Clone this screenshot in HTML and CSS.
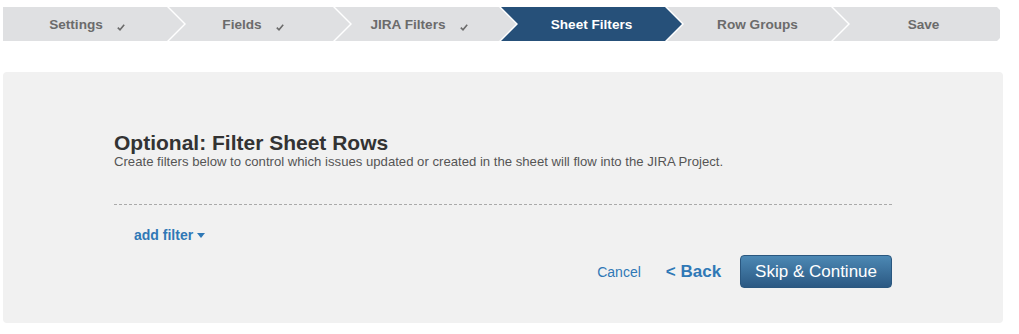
FILE: index.html
```html
<!DOCTYPE html>
<html lang="en">
<head>
    <meta charset="UTF-8">
    <meta name="viewport" content="width=device-width, initial-scale=1.0">
    <title>Sheet Filters</title>
    <link rel="stylesheet" href="styles.css">
</head>
<body>
    <div class="page">
        <div class="wizard">
            <div class="step first done">Settings<span class="check"><svg width="8" height="7" viewBox="0 0 8 7"><polyline points="0.8,3.6 3,5.8 7.2,0.8" fill="none" stroke="#6b6b6b" stroke-width="1.6"/></svg></span></div>
            <div class="step done">Fields<span class="check"><svg width="8" height="7" viewBox="0 0 8 7"><polyline points="0.8,3.6 3,5.8 7.2,0.8" fill="none" stroke="#6b6b6b" stroke-width="1.6"/></svg></span></div>
            <div class="step done">JIRA Filters<span class="check"><svg width="8" height="7" viewBox="0 0 8 7"><polyline points="0.8,3.6 3,5.8 7.2,0.8" fill="none" stroke="#6b6b6b" stroke-width="1.6"/></svg></span></div>
            <div class="step active">Sheet Filters</div>
            <div class="step">Row Groups</div>
            <div class="step">Save</div>
        </div>

        <div class="panel">
            <div class="content">
                <h1>Optional: Filter Sheet Rows</h1>
                <p class="intro">Create filters below to control which issues updated or created in the sheet will flow into the JIRA Project.</p>
                <div class="filters">
                    <a class="add-filter" href="#">add filter<span class="caret"></span></a>
                </div>
                <div class="actions">
                    <a class="cancel" href="#">Cancel</a>
                    <a class="back" href="#">&lt; Back</a>
                    <button type="button" class="primary">Skip &amp; Continue</button>
                </div>
            </div>
        </div>
    </div>
</body>
</html>
```

FILE: styles.css
```css
body {
    margin: 0;
    background-color: #fff;
    font-family: "Liberation Sans", Arial, sans-serif;
}
.page {
    width: 1000px;
    padding: 7px 0 0 3px;
}
.wizard {
    display: flex;
    width: 997px;
    height: 34px;
    overflow: hidden;
}
.step {
    flex: 0 0 181px;
    margin-left: -15px;
    padding-top: 1px;
    display: flex;
    align-items: center;
    justify-content: center;
    background-color: #dfe0e2;
    color: #6b6b6b;
    font-size: 13.6px;
    font-weight: bold;
    clip-path: polygon(0 0, calc(100% - 17px) 0, 100% 50%, calc(100% - 17px) 100%, 0 100%, 17px 50%);
}
.step.first {
    margin-left: 0;
    clip-path: polygon(0 0, calc(100% - 17px) 0, 100% 50%, calc(100% - 17px) 100%, 0 100%);
}
.step.active {
    background-color: #265079;
    color: #fff;
}
.check {
    display: inline-block;
    margin: 5px 13px 0 14px;
    line-height: 0;
}
.panel {
    margin-top: 31px;
    background-color: #f1f1f1;
    border-radius: 4px;
    padding: 59px 0 35px;
}
.content {
    width: 778px;
    margin: 0 auto;
}
h1 {
    margin: 0;
    font-size: 21px;
    line-height: 23px;
    color: #333;
}
.intro {
    margin: 0;
    font-size: 13.15px;
    line-height: 16px;
    color: #555;
}
.filters {
    margin-top: 34px;
    border-top: 1px dashed #aaa;
    padding: 22px 0 0 20px;
    font-size: 14px;
    line-height: 16px;
}
a {
    color: #2f78b6;
    text-decoration: none;
}
.add-filter {
    font-weight: bold;
}
.caret {
    display: inline-block;
    margin-left: 4px;
    vertical-align: 2px;
    border-left: 4px solid transparent;
    border-right: 4px solid transparent;
    border-top: 5px solid #2f78b6;
}
.actions {
    display: flex;
    justify-content: flex-end;
    align-items: center;
    height: 33px;
    margin-top: 12px;
}
.cancel {
    font-size: 14px;
    margin-top: 1px;
}
.back {
    margin-left: 25px;
    font-size: 17px;
    font-weight: bold;
}
.primary {
    margin-left: 19px;
    height: 33px;
    padding: 0 14px;
    border: 1px solid #2a577f;
    border-radius: 4px;
    background: linear-gradient(#4c88b4, #2b5983);
    color: #fff;
    font-family: "Liberation Sans", Arial, sans-serif;
    font-size: 17px;
    cursor: pointer;
}
```
